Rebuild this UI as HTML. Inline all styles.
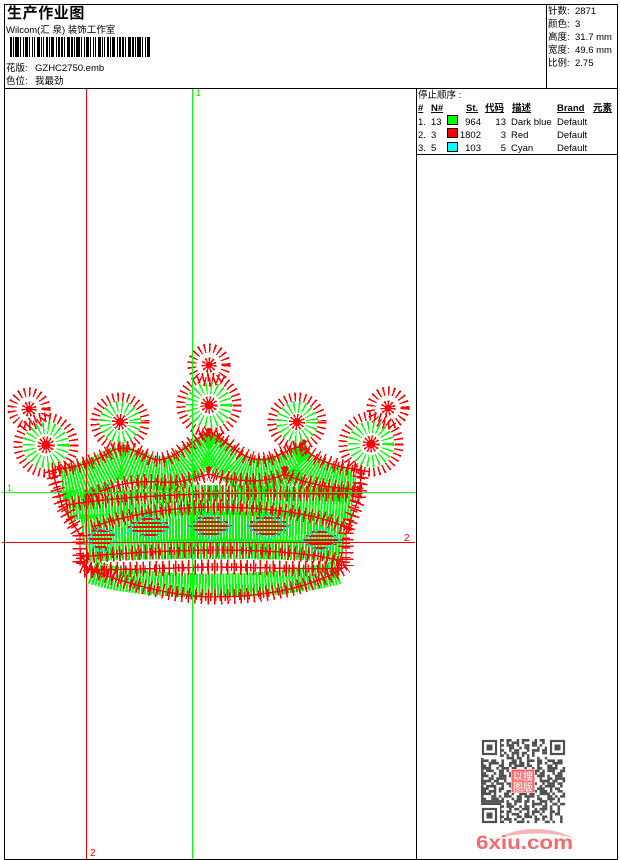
<!DOCTYPE html>
<html><head><meta charset="utf-8"><style>
html,body{margin:0;padding:0;background:#fff;width:620px;height:860px;overflow:hidden}
svg{position:absolute;left:0;top:0}
text{font-family:"Liberation Sans","WenQuanYi Zen Hei","Noto Sans CJK SC",sans-serif;font-size:9.5px;fill:#000}
.b{font-weight:bold}
.q path{stroke:#505050;stroke-width:1.02;fill:none}
</style></head><body>
<svg width="620" height="860" viewBox="0 0 620 860" xmlns="http://www.w3.org/2000/svg">
<defs>
<g id="bands" fill="none">
<path d="M52 470C75 468 95 462 110 452C122 444 135 450 150 458C170 466 185 445 209 432C228 440 240 460 262 460C280 458 290 446 302 447C312 456 325 466 362 470"/>
<path d="M88 497C110 486 130 480 160 482C180 484 195 478 209 474C235 482 265 484 285 474C305 484 330 488 362 490"/>
<path d="M66 505C110 498 150 496 200 494C260 492 310 494 360 494"/>
<path d="M92 527C130 514 170 508 210 507C270 507 320 514 352 530"/>
<path d="M80 557C130 552 170 551 210 550C260 550 310 552 345 562"/>
<path d="M84 570C120 570 170 568 210 567C260 567 310 570 342 568"/>
<path d="M82 566C120 582 165 595 210 597C260 597 310 590 346 566"/>
<path d="M52 470L62 505L80 535L80 566"/>
<path d="M362 470L358 500L346 532L346 566"/>
</g>
<g id="mot" fill="none">
<path d="M92 531H112M88 535H115M88 539H112M90 543H110M94 547H106"/>
<path d="M140 519H160M132 523H168M128 527H171M132 531H166M140 535H158"/>
<path d="M198 518H220M192 522H228M188 526H232M192 530H228M198 534H222"/>
<path d="M256 518H280M250 522H286M247 526H289M250 530H286M256 534H280"/>
<path d="M312 532H328M306 536H336M303 540H340M306 544H336M312 548H328"/>
</g>
</defs>

<!-- green satin fill -->
<g fill="none" stroke="#00ff00" shape-rendering="crispEdges" stroke-dasharray="2 1">
<path stroke-width="34" d="M62 484C90 482 110 464 122 462C145 472 170 482 190 462L209 450L230 464C245 480 270 478 298 464C310 480 340 486 356 486"/>
<path stroke-width="30" d="M66 506C130 498 280 498 352 506"/>
<path stroke-width="30" d="M82 530C130 525 280 525 345 530"/>
<path stroke-width="20" d="M86 552C140 548 280 548 344 552"/>
<path stroke-width="24" d="M92 572C140 590 280 590 338 572"/>
</g>

<!-- red satin edges -->
<g shape-rendering="crispEdges">
<use href="#bands" stroke="#ff0000" stroke-width="15" stroke-dasharray="1.5 5"/>
<use href="#bands" stroke="#ff0000" stroke-width="8" stroke-dasharray="1.4 3.4" stroke-dashoffset="2"/>
<use href="#bands" stroke="#ff0000" stroke-width="1.4"/>
<use href="#mot" stroke="#ff0000" stroke-width="2"/>
</g>
<g fill="none" stroke="#00e8e8" stroke-width="1.2">
<path d="M88 538L100 528L115 533L116 540L106 552L96 550Z"/>
<path d="M115 534C120 535 125 535 130 531"/>
<path d="M128 530L146 515L171 527L152 539Z"/>
<path d="M188 527L208 514L232 527L210 540Z"/>
<path d="M247 527L268 514L289 527L268 540Z"/>
<path d="M302 540L322 528L340 540L320 552Z"/>
</g>

<!-- flowers -->
<g fill="none" stroke="#ff0000" shape-rendering="crispEdges">
<g stroke-width="9" stroke-dasharray="1.5 3.5">
<circle cx="29" cy="409" r="17"/><circle cx="209" cy="365" r="17"/><circle cx="388" cy="408" r="17"/>
</g>
<g stroke-width="9" stroke-dasharray="1.5 3.5">
<circle cx="46" cy="445" r="28"/><circle cx="209" cy="405" r="28"/><circle cx="371" cy="444" r="28"/>
<circle cx="120" cy="422" r="25"/><circle cx="297" cy="422" r="25"/>
</g>
<g stroke="#00ff00" stroke-width="12" stroke-dasharray="1.4 3.4">
<circle cx="46" cy="445" r="17"/><circle cx="209" cy="405" r="17"/><circle cx="371" cy="444" r="17"/>
<circle cx="120" cy="422" r="15"/><circle cx="297" cy="422" r="15"/>
</g>
<g stroke-width="6" stroke-dasharray="1.2 1.4">
<circle cx="29" cy="409" r="4.5"/><circle cx="209" cy="365" r="4.5"/><circle cx="388" cy="408" r="4.5"/>
<circle cx="46" cy="445" r="5.5"/><circle cx="209" cy="405" r="5.5"/><circle cx="371" cy="444" r="5.5"/>
<circle cx="120" cy="422" r="5"/><circle cx="297" cy="422" r="5"/>
</g>
</g>
<g fill="#ff0000">
<circle cx="29" cy="409" r="3.5"/><circle cx="209" cy="365" r="3.5"/><circle cx="388" cy="408" r="3.5"/>
<circle cx="46" cy="445" r="4.5"/><circle cx="209" cy="405" r="4.5"/><circle cx="371" cy="444" r="4.5"/>
<circle cx="120" cy="422" r="4"/><circle cx="297" cy="422" r="4"/>
</g>

<!-- guides -->
<g shape-rendering="crispEdges">
<rect x="86" y="89" width="1" height="770" fill="#ff0000"/>
<rect x="192" y="89" width="1" height="770" fill="#00ff00"/>
<rect x="2" y="492" width="413" height="1" fill="#00ff00"/>
<rect x="2" y="542" width="413" height="1" fill="#ff0000"/>
</g>
<text x="196" y="96" style="fill:#00e000;font-size:9px">1</text>
<text x="7" y="491" style="fill:#00e000;font-size:9px">1</text>
<text x="404" y="541" style="fill:#ff0000;font-size:10px">2</text>
<text x="90" y="856" style="fill:#ff0000;font-size:10px">2</text>

<!-- frame -->
<g fill="#000" shape-rendering="crispEdges">
<rect x="4" y="4" width="614" height="1"/>
<rect x="4" y="88" width="614" height="1"/>
<rect x="4" y="859" width="614" height="1"/>
<rect x="4" y="4" width="1" height="856"/>
<rect x="617" y="4" width="1" height="856"/>
<rect x="546" y="4" width="1" height="84"/>
<rect x="416" y="88" width="1" height="772"/>
<rect x="416" y="154" width="202" height="1"/>
</g>

<!-- header -->
<text x="7" y="18" class="b" style="font-size:15px;letter-spacing:.6px">生产作业图</text>
<text x="6" y="33">Wilcom(汇 泉) 装饰工作室</text>
<line x1="10" y1="47" x2="151" y2="47" stroke="#000" stroke-width="20" shape-rendering="crispEdges" stroke-dasharray="2 1 1 1 4 1 1 2 1 1 3 1 1 2 1 1 1 2 3 1 1 1 1 2 2 1 1 1 3 2 1 1 2 1 2 1 1 2 3 1"/>
<text x="6" y="71">花版:</text><text x="35" y="71">GZHC2750.emb</text>
<text x="6" y="84">色位:</text><text x="35" y="84">我最劲</text>

<text x="548" y="14">针数:</text><text x="575" y="14">2871</text>
<text x="548" y="27">颜色:</text><text x="575" y="27">3</text>
<text x="548" y="40">高度:</text><text x="575" y="40">31.7 mm</text>
<text x="548" y="53">宽度:</text><text x="575" y="53">49.6 mm</text>
<text x="548" y="66">比例:</text><text x="575" y="66">2.75</text>

<!-- table -->
<text x="418" y="98">停止顺序 :</text>
<text x="418" y="111" class="b" text-decoration="underline">#</text>
<text x="431" y="111" class="b" text-decoration="underline">N#</text>
<text x="466" y="111" class="b" text-decoration="underline">St.</text>
<text x="485" y="111" class="b" text-decoration="underline">代码</text>
<text x="512" y="111" class="b" text-decoration="underline">描述</text>
<text x="557" y="111" class="b" text-decoration="underline">Brand</text>
<text x="593" y="111" class="b" text-decoration="underline">元素</text>
<text x="418" y="125">1.</text><text x="431" y="125">13</text><text x="481" y="125" text-anchor="end">964</text><text x="506" y="125" text-anchor="end">13</text><text x="511" y="125">Dark blue</text><text x="557" y="125">Default</text>
<text x="418" y="138">2.</text><text x="431" y="138">3</text><text x="481" y="138" text-anchor="end">1802</text><text x="506" y="138" text-anchor="end">3</text><text x="511" y="138">Red</text><text x="557" y="138">Default</text>
<text x="418" y="151">3.</text><text x="431" y="151">5</text><text x="481" y="151" text-anchor="end">103</text><text x="506" y="151" text-anchor="end">5</text><text x="511" y="151">Cyan</text><text x="557" y="151">Default</text>
<g stroke="#000" shape-rendering="crispEdges">
<rect x="447.5" y="115.5" width="10" height="9" fill="#00ff00"/>
<rect x="447.5" y="128.5" width="10" height="9" fill="#ff0000"/>
<rect x="447.5" y="142.5" width="10" height="9" fill="#00ffff"/>
</g>

<!-- QR -->
<g class="q" transform="translate(481 739) scale(2.55)">
<path d="M0 .5H33" stroke-dasharray="9 1 2 2 1 1 3 2 1 1 2 3"/>
<path d="M0 1.5H33" stroke-dasharray="8 2 1 1 3 1 1 3 2 2 1 1"/>
<path d="M0 2.5H33" stroke-dasharray="9 1 3 1 1 2 2 1 2 1 1 3"/>
<path d="M0 3.5H33" stroke-dasharray="8 3 2 2 1 1 2 3 1 2"/>
<path d="M0 4.5H33" stroke-dasharray="9 2 1 1 2 3 1 1 3 1"/>
<path d="M0 5.5H33" stroke-dasharray="8 1 1 2 3 1 2 2 1 3 2 1"/>
<path d="M0 6.5H33" stroke-dasharray="9 1 1 1 1 1 1 1 1 1 1 1 1"/>
<path d="M0 7.5H33" stroke-dasharray="1 9 3 1 2 2 1 3 1 2"/>
<path d="M0 8.5H33" stroke-dasharray="3 1 2 2 1 3 2 1 1 2 3 1 2 2"/>
<path d="M0 9.5H33" stroke-dasharray="1 2 4 1 1 2 3 1 2 1 1 3 2 1"/>
<path d="M0 10.5H33" stroke-dasharray="2 1 1 3 2 2 1 1 4 1 2 2 1 3"/>
<path d="M0 11.5H33" stroke-dasharray="4 2 1 1 3 1 2 3 1 2 1 1 2 2"/>
<path d="M0 12.5H33" stroke-dasharray="1 1 3 2 2 1 1 3 1 1 3 2 2 1"/>
<path d="M0 13.5H33" stroke-dasharray="2 3 1 1 2 2 4 1 1 2 3 1"/>
<path d="M0 14.5H33" stroke-dasharray="3 1 1 2 3 1 1 4 2 1 1 2"/>
<path d="M0 15.5H33" stroke-dasharray="1 2 2 1 4 2 1 1 3 1 2 3"/>
<path d="M0 16.5H33" stroke-dasharray="4 1 2 2 1 3 1 2 1 1 3 2"/>
<path d="M0 17.5H33" stroke-dasharray="2 2 1 1 3 1 2 3 2 1 1 1"/>
<path d="M0 18.5H33" stroke-dasharray="1 1 4 2 1 2 3 1 1 3 2 2"/>
<path d="M0 19.5H33" stroke-dasharray="3 2 1 1 2 3 1 1 4 1 2 1"/>
<path d="M0 20.5H33" stroke-dasharray="2 1 3 1 1 2 2 2 1 3 1 1"/>
<path d="M0 21.5H33" stroke-dasharray="4 1 1 3 2 1 1 2 3 1 2 2"/>
<path d="M0 22.5H33" stroke-dasharray="1 3 2 1 1 1 3 2 2 1 4 1"/>
<path d="M0 23.5H33" stroke-dasharray="2 2 3 1 1 3 1 1 2 2 1 3"/>
<path d="M0 24.5H33" stroke-dasharray="9 1 1 2 3 1 2 1 1 2 3 1 1 2 1 2"/>
<path d="M0 25.5H33" stroke-dasharray="8 2 2 1 1 3 1 2 4 1 1 2 2 1 2 1"/>
<path d="M0 26.5H33" stroke-dasharray="9 1 3 2 1 1 2 1 1 3 2 1 1 2 1 3"/>
<path d="M0 27.5H33" stroke-dasharray="8 3 1 1 2 1 3 2 1 1 3 1 1 2 1 2"/>
<path d="M0 28.5H33" stroke-dasharray="9 1 2 3 1 2 1 1 3 1 1 2 2 1 1 3"/>
<path d="M0 29.5H33" stroke-dasharray="8 2 1 1 3 2 2 1 1 2 1 3 1 1 2 3"/>
<path d="M0 30.5H33" stroke-dasharray="9 1 1 3 2 1 3 1 1 2 2 1 1 3 1 2"/>
<path d="M0 31.5H33" stroke-dasharray="8 1 3 1 1 2 1 4 2 1 1 2 1 3 1 1"/>
<path d="M0 32.5H33" stroke-dasharray="9 2 1 2 3 1 1 2 1 3 2 1 1 2 1 3"/>
</g>
<g fill="#fff"><rect x="481" y="739" width="19" height="19"/><rect x="547" y="739" width="19" height="19"/><rect x="481" y="805" width="19" height="19"/></g>
<g fill="none" stroke="#505050" stroke-width="2.2">
<rect x="483" y="741" width="13" height="13"/><rect x="551" y="741" width="13" height="13"/><rect x="483" y="809" width="13" height="13"/>
</g>
<g fill="#505050"><rect x="486.5" y="744.5" width="6" height="6"/><rect x="554.5" y="744.5" width="6" height="6"/><rect x="486.5" y="812.5" width="6" height="6"/></g>
<rect x="511" y="769" width="24" height="24" fill="#fff"/>
<rect x="512" y="770" width="22" height="22" fill="#fa7c7c" stroke="#ee4444" stroke-width=".8"/>
<text x="513" y="780" style="fill:#fff;font-size:10px">以搜</text>
<text x="513" y="791" style="fill:#fff;font-size:10px">图版</text>

<!-- logo -->
<path d="M498 838C520 826 550 826 574 838C550 832 522 832 498 838Z" fill="#f7b4b4"/>
<text x="476" y="849" textLength="97" lengthAdjust="spacingAndGlyphs" style="font-size:19px;font-weight:bold;fill:#f36b6c">6xiu.com</text>
</svg>
</body></html>
